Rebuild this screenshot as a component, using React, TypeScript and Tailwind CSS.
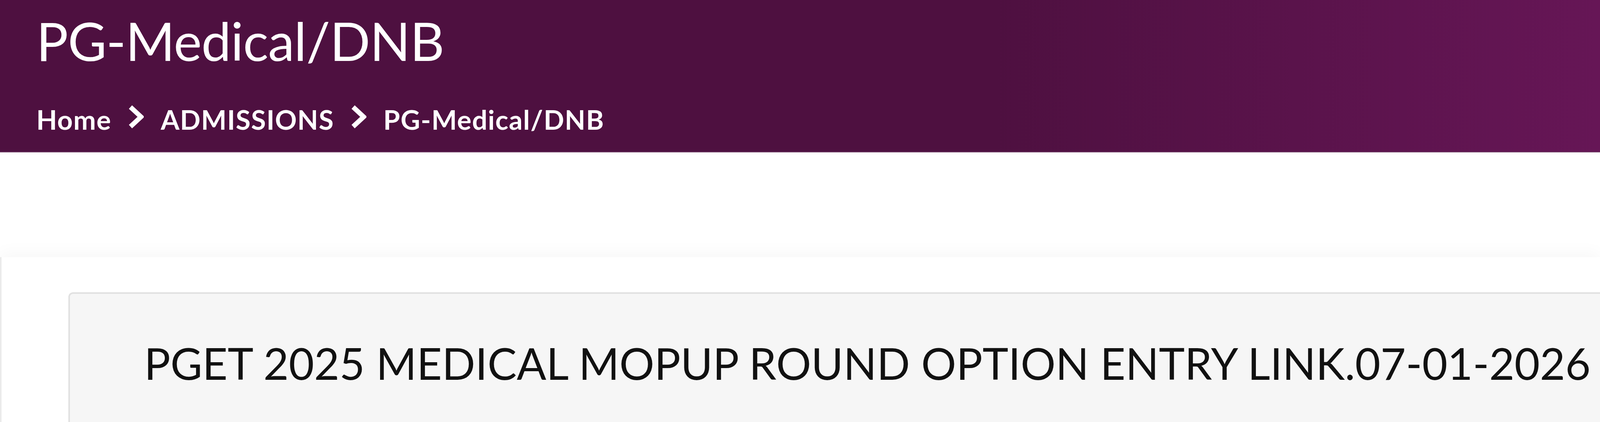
import React from 'react';

function Chevron() {
  return (
    <svg width="40" height="60" viewBox="0 0 40 60" className="mb-[12px] shrink-0" fill="none">
      <polyline points="6,5 33,30 6,55" stroke="#ffffff" strokeWidth="12" strokeLinejoin="miter" strokeLinecap="butt" />
    </svg>
  );
}

export default function App() {
  const crumbs = ['Home', 'ADMISSIONS', 'PG-Medical/DNB'];

  return (
    <div className="min-h-screen bg-white" style={{ fontFamily: 'Lato, "Open Sans", sans-serif' }}>
      {/* Page banner */}
      <header className="h-[390px] pl-[93px] pt-[36px] bg-[linear-gradient(90deg,#4e1040_0%,#4e1040_62%,#661656_100%)] border-b-[2px] border-[#6e3a63]">
        <h1 className="text-[136px] leading-[136px] font-normal text-white tracking-[-1px]">PG-Medical/DNB</h1>
        <nav className="mt-[97px] flex items-center gap-[43px] text-[69px] leading-[69px] font-bold text-white tracking-[1.5px]">
          {crumbs.map((c, i) => (
            <React.Fragment key={c}>
              {i > 0 && <Chevron />}
              <span>{c}</span>
            </React.Fragment>
          ))}
        </nav>
      </header>

      {/* Content */}
      <div className="h-[268px]" />
      <section className="bg-white border-l-[4px] border-[#ebebeb] shadow-[0_-10px_40px_rgba(0,0,0,0.035)] pl-[171px] pt-[90px] min-h-[600px]">
        <div className="bg-[#f6f6f6] border-[4px] border-r-0 border-[#e1e1e1] rounded-l-[12px] pl-[190px] pt-[121px] pb-[200px]">
          <h2 className="text-[112px] leading-[112px] font-normal text-[#111111]">
            PGET 2025 MEDICAL MOPUP ROUND OPTION ENTRY LINK.07-01-2026
          </h2>
        </div>
      </section>
    </div>
  );
}
